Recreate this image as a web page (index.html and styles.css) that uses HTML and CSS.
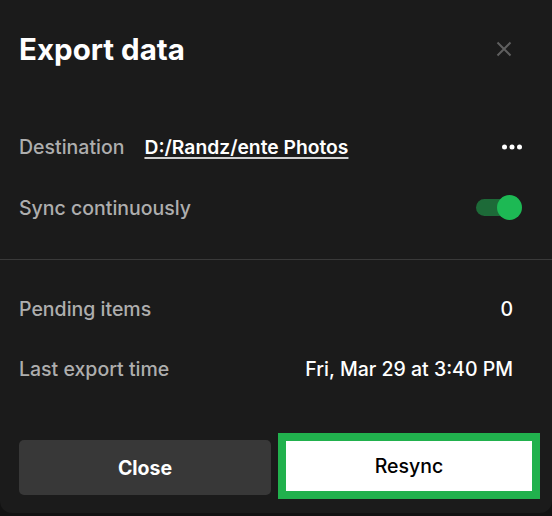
FILE: index.html
```html
<!DOCTYPE html>
<html>
<head>
<meta charset="utf-8">
<link rel="stylesheet" href="styles.css">
</head>
<body>
<div class="dialog">
  <div class="header">
    <h2 class="title">Export data</h2>
    <svg class="close-x" width="16" height="16" viewBox="0 0 16 16">
      <path d="M1.5 1.5 L14.5 14.5 M14.5 1.5 L1.5 14.5" stroke="#5f5f5f" stroke-width="2" fill="none"/>
    </svg>
  </div>
  <div class="section first">
    <div class="row">
      <div class="dest">
        <span class="label">Destination</span>
        <span class="link">D:/Randz/ente Photos</span>
      </div>
      <svg class="dots" width="20" height="6" viewBox="0 0 20 6">
        <circle cx="2.5" cy="3" r="2.5" fill="#fff"/>
        <circle cx="10" cy="3" r="2.5" fill="#fff"/>
        <circle cx="17.5" cy="3" r="2.5" fill="#fff"/>
      </svg>
    </div>
    <div class="row">
      <span class="label">Sync continuously</span>
      <div class="toggle"><div class="track"></div><div class="thumb"></div></div>
    </div>
  </div>
  <div class="divider"></div>
  <div class="section second">
    <div class="row row60">
      <span class="label">Pending items</span>
      <span class="value">0</span>
    </div>
    <div class="row row60">
      <span class="label">Last export time</span>
      <span class="value">Fri, Mar 29 at 3:40 PM</span>
    </div>
  </div>
  <div class="actions">
    <button class="btn btn-close">Close</button>
    <button class="btn btn-resync">Resync</button>
  </div>
</div>
</body>
</html>
```
FILE: styles.css
```css
* { box-sizing: border-box; }
html, body { margin: 0; padding: 0; }
body {
  background: #121212;
  font-family: Inter, "Noto Sans", sans-serif;
  width: 552px;
  height: 516px;
  overflow: hidden;
}
.dialog {
  background: #1b1b1b;
  height: 513px;
  border-radius: 0 0 12px 12px;
  display: flex;
  flex-direction: column;
}
.header {
  height: 98px;
  display: flex;
  align-items: center;
  justify-content: space-between;
  padding: 0 40px 0 19px;
}
.title {
  margin: 0;
  color: #fff;
  font-size: 29.5px;
  font-weight: 700;
  letter-spacing: 0;
}
.close-x { display: block; }
.section { padding: 0 30px 0 19px; }
.section.first { padding-top: 18px; padding-bottom: 21px; }
.section.second { padding-top: 19px; }
.row {
  height: 61px;
  display: flex;
  align-items: center;
  justify-content: space-between;
}
.row60 { height: 60px; }
.label {
  color: #aeaeae;
  font-size: 19.5px;
  font-weight: 500;
}
.dest { display: flex; align-items: center; gap: 20px; }
.link {
  color: #fff;
  font-size: 19.3px;
  font-weight: 600;
  text-decoration: underline;
  text-decoration-color: #d0d0d0;
  text-underline-offset: 3px;
  text-decoration-thickness: 1.5px;
}
.dots { display: block; }
.value {
  color: #fff;
  font-size: 19.5px;
  font-weight: 500;
  padding-right: 9px;
}
.toggle {
  position: relative;
  width: 46px;
  height: 25px;
}
.track {
  position: absolute;
  left: 0;
  top: 4px;
  width: 42px;
  height: 17px;
  border-radius: 9px;
  background: #1d6a38;
}
.thumb {
  position: absolute;
  right: 0;
  top: 0;
  width: 25px;
  height: 25px;
  border-radius: 50%;
  background: #1db954;
}
.divider { height: 1px; background: #3a3a3a; }
.actions {
  display: flex;
  align-items: flex-start;
  padding: 41px 20px 0 19px;
  gap: 15px;
}
.btn {
  font-family: Inter, "Noto Sans", sans-serif;
  font-size: 19.5px;
  border: none;
  cursor: pointer;
}
.btn-close {
  width: 252px;
  height: 55px;
  background: #383838;
  color: #fff;
  font-weight: 700;
  border-radius: 5px;
}
.btn-resync {
  width: 246px;
  height: 50px;
  margin-top: 1px;
  background: #fff;
  color: #000;
  font-weight: 500;
  border-radius: 0;
  outline: 8px solid #21b14d;
}
```
